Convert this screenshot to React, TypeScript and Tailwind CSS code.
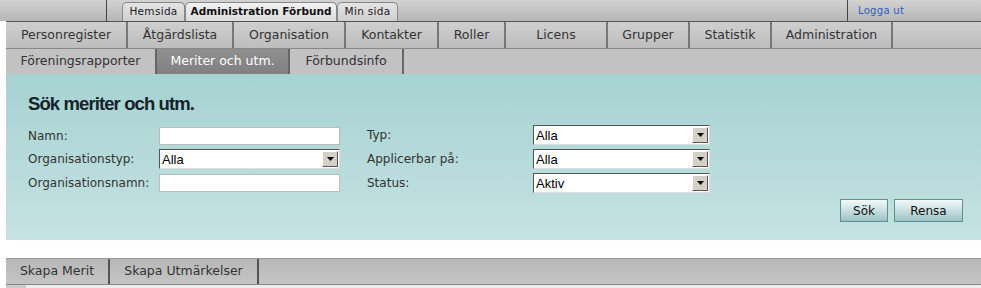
import React from 'react';

const mainNav = [
  { label: 'Personregister', w: 'w-[122px]' },
  { label: 'Åtgärdslista', w: 'w-[106px]' },
  { label: 'Organisation', w: 'w-[112px]' },
  { label: 'Kontakter', w: 'w-[93px]' },
  { label: 'Roller', w: 'w-[67px]' },
  { label: 'Licens', w: 'w-[102px]' },
  { label: 'Grupper', w: 'w-[82px]' },
  { label: 'Statistik', w: 'w-[82px]' },
  { label: 'Administration', w: 'w-[121px]' },
];

const subNav = [
  { label: 'Föreningsrapporter', w: 'w-[151px]', active: false },
  { label: 'Meriter och utm.', w: 'w-[133px]', active: true },
  { label: 'Förbundsinfo', w: 'w-[114px]', active: false },
];

const SelectBox = ({ value, w }: { value: string; w: string }) => (
  <div className={`${w} h-[20px] flex items-center bg-white border border-t-[#555] border-l-[#555] border-r-[#ddd] border-b-[#ddd]`}>
    <span className="flex-1 pl-[2px] text-[13px] text-black font-['Liberation_Sans',sans-serif] leading-none">{value}</span>
    <span className="w-[16px] h-[16px] mr-[1px] flex items-center justify-center bg-[#d4d0c8] border border-t-white border-l-white border-r-[#555] border-b-[#555]">
      <svg width="7" height="4" viewBox="0 0 7 4">
        <path d="M0 0h7L3.5 4z" fill="#000" />
      </svg>
    </span>
  </div>
);

const TextBox = ({ w }: { w: string }) => (
  <div className={`${w} h-[18px] bg-white border border-[#bbb]`} />
);

const App = () => {
  return (
    <div className="w-[981px] h-[288px] overflow-hidden bg-white font-['DejaVu_Sans',Verdana,sans-serif]">
      {/* top bar */}
      <div className="h-[21px] flex bg-gradient-to-b from-[#d2d2d2] to-[#b6b6b6]">
        <div className="w-[107px] border-r border-[#444]" />
        <div className="flex items-end pl-[15px]">
          <div className="w-[63px] h-[19px] flex items-center justify-center rounded-t-[5px] border border-b-0 border-[#888] bg-gradient-to-b from-[#e4e4e4] to-[#cfcfcf] text-[10.5px] text-[#222] tracking-[0.3px]">
            Hemsida
          </div>
          <div className="w-[152px] h-[19px] flex items-center justify-center rounded-t-[5px] border border-b-0 border-[#888] bg-gradient-to-b from-[#f2f2f2] to-[#dcdcdc] text-[10.5px] font-bold text-[#111]">
            Administration Förbund
          </div>
          <div className="w-[61px] h-[19px] flex items-center justify-center rounded-t-[5px] border border-b-0 border-[#888] bg-gradient-to-b from-[#e4e4e4] to-[#cfcfcf] text-[10.5px] text-[#222] tracking-[0.3px]">
            Min sida
          </div>
        </div>
        <div className="flex-1" />
        <div className="w-[134px] border-l border-[#444] pl-[10px] pt-[3px] text-[10px] text-[#2a5fbf] tracking-[0.3px]">
          Logga ut
        </div>
      </div>

      {/* main nav */}
      <div className="ml-[6px] h-[27px] flex border-t border-[#555] bg-gradient-to-b from-[#cfcfcf] to-[#bdbdbd]">
        {mainNav.map((item) => (
          <div
            key={item.label}
            className={`${item.w} flex items-center justify-center border-r-2 border-[#777] text-[12.5px] text-[#333]`}
          >
            {item.label}
          </div>
        ))}
        <div className="flex-1" />
      </div>

      {/* sub nav */}
      <div className="ml-[6px] h-[26px] flex border-t border-[#888] bg-[#c2c2c2]">
        {subNav.map((item) => (
          <div
            key={item.label}
            className={`${item.w} flex items-center justify-center border-r-2 border-[#666] text-[12.5px] ${
              item.active ? 'bg-gradient-to-b from-[#909090] to-[#808080] text-white' : 'text-[#333]'
            }`}
          >
            {item.label}
          </div>
        ))}
        <div className="flex-1" />
      </div>

      {/* search panel */}
      <div className="ml-[6px] h-[166px] bg-gradient-to-b from-[#a6d2d2] to-[#c6e2e2] pl-[22px] pr-[18px] pt-[19px]">
        <h1 className="text-[18.5px] font-bold text-[#14232a] tracking-[-0.9px] leading-[22px] font-['Liberation_Sans',Arial,sans-serif]">
          Sök meriter och utm.
        </h1>
        <div className="flex mt-[11px]">
          <div className="w-[339px] flex flex-col gap-[4px] text-[12px] text-[#333]">
            <div className="flex items-center h-[19px]">
              <span className="w-[131px]">Namn:</span>
              <TextBox w="w-[181px]" />
            </div>
            <div className="flex items-center h-[20px]">
              <span className="w-[131px]">Organisationstyp:</span>
              <SelectBox value="Alla" w="w-[181px]" />
            </div>
            <div className="flex items-center h-[19px]">
              <span className="w-[131px]">Organisationsnamn:</span>
              <TextBox w="w-[181px]" />
            </div>
          </div>
          <div className="flex flex-col gap-[4px] text-[12px] text-[#333] -mt-[1px]">
            <div className="flex items-center h-[20px]">
              <span className="w-[166px]">Typ:</span>
              <SelectBox value="Alla" w="w-[177px]" />
            </div>
            <div className="flex items-center h-[20px]">
              <span className="w-[166px]">Applicerbar på:</span>
              <SelectBox value="Alla" w="w-[177px]" />
            </div>
            <div className="flex items-center h-[20px]">
              <span className="w-[166px]">Status:</span>
              <SelectBox value="Aktiv" w="w-[177px]" />
            </div>
          </div>
        </div>
        <div className="flex justify-end gap-[6px] mt-[6px]">
          <button className="w-[48px] h-[23px] border border-[#5f8f8f] bg-gradient-to-b from-[#f4fafa] to-[#9cc4c8] text-[12px] text-[#111]">
            Sök
          </button>
          <button className="w-[69px] h-[23px] border border-[#5f8f8f] bg-gradient-to-b from-[#f4fafa] to-[#9cc4c8] text-[12px] text-[#111]">
            Rensa
          </button>
        </div>
      </div>

      <div className="h-[18px]" />

      {/* action bar */}
      <div className="ml-[6px] h-[26px] flex border-t border-[#999] bg-gradient-to-b from-[#b8b8b8] to-[#c4c4c4]">
        <div className="w-[104px] flex items-center justify-center border-r-2 border-[#555] text-[12.5px] text-[#333]">
          Skapa Merit
        </div>
        <div className="w-[149px] flex items-center justify-center border-r-2 border-[#555] text-[12.5px] text-[#333]">
          Skapa Utmärkelser
        </div>
        <div className="flex-1" />
      </div>
      <div className="ml-[6px] h-[4px] flex border-t border-[#888] bg-[#eee]">
        <div className="w-[20px] bg-[#ccc]" />
      </div>
    </div>
  );
};

export default App;
